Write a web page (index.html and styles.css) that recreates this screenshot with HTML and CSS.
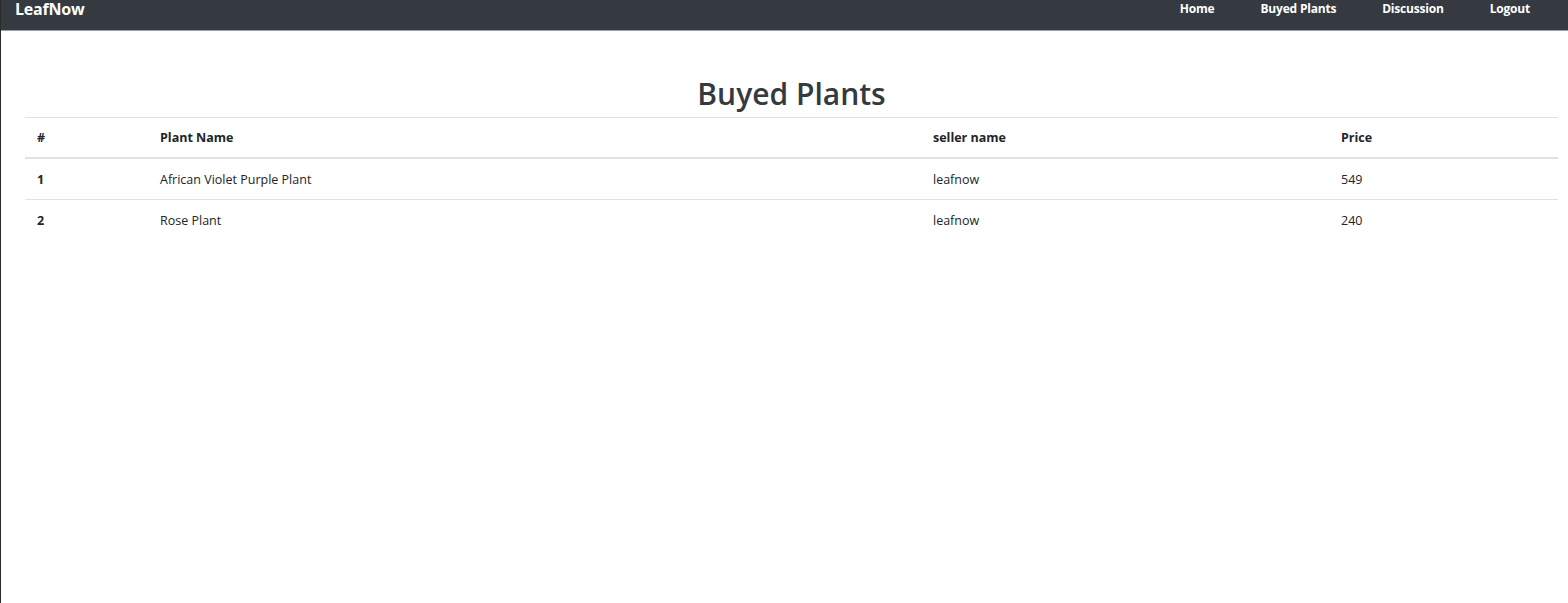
FILE: index.html
```html
<!DOCTYPE html>
<html>
<head>
<meta charset="utf-8">
<link rel="stylesheet" href="styles.css">
</head>
<body>
<nav class="navbar">
  <a class="brand" href="#">LeafNow</a>
  <ul class="nav-links">
    <li><a href="#">Home</a></li>
    <li><a href="#">Buyed Plants</a></li>
    <li><a href="#">Discussion</a></li>
    <li><a href="#">Logout</a></li>
  </ul>
</nav>
<main class="content">
  <h2 class="title">Buyed Plants</h2>
  <table class="table">
    <thead>
      <tr><th class="c1">#</th><th class="c2">Plant Name</th><th class="c3">seller name</th><th class="c4">Price</th></tr>
    </thead>
    <tbody>
      <tr><th>1</th><td>African Violet Purple Plant</td><td>leafnow</td><td>549</td></tr>
      <tr><th>2</th><td>Rose Plant</td><td>leafnow</td><td>240</td></tr>
    </tbody>
  </table>
</main>
</body>
</html>
```
FILE: styles.css
```css
html, body { margin: 0; padding: 0; }
body {
  font-family: "Open Sans", "Noto Sans", sans-serif;
  color: #212529;
  background: #fff;
  border-left: 1px solid #2b2b2b;
  min-height: 603px;
  box-sizing: border-box;
}
.navbar {
  height: 31px;
  background: #343a40;
  display: flex;
  align-items: flex-start;
  justify-content: space-between;
  padding: 0 15px 0 14px;
  border-bottom: 1px solid #9aa0a6;
  box-sizing: border-box;
}
.brand {
  color: #fff;
  font-weight: 700;
  font-size: 16px;
  line-height: 18px;
  text-decoration: none;
  letter-spacing: -0.2px;
}
.nav-links {
  list-style: none;
  margin: 0;
  padding: 0;
  display: flex;
}
.nav-links a {
  display: block;
  color: #fff;
  font-weight: 700;
  font-size: 12px;
  line-height: 18px;
  text-decoration: none;
  padding: 0 23px;
  letter-spacing: -0.2px;
}
.content {
  margin: 0 10px 0 24px;
  padding-top: 40px;
}
.title {
  margin: 0;
  text-align: center;
  font-size: 30px;
  font-weight: 600;
  color: #343a40;
  line-height: 46px;
}
.table {
  width: 100%;
  border-collapse: collapse;
  font-size: 12.5px;
}
.table th, .table td {
  text-align: left;
  padding: 0 12px;
  height: 40px;
  border-top: 1px solid #dee2e6;
  vertical-align: middle;
}
.table thead th { border-bottom: 2px solid #dee2e6; font-weight: 700; height: 39px; }
.table tbody th { font-weight: 700; }
.c1 { width: 99px; }
.c2 { width: 749px; }
.c3 { width: 384px; }
```
